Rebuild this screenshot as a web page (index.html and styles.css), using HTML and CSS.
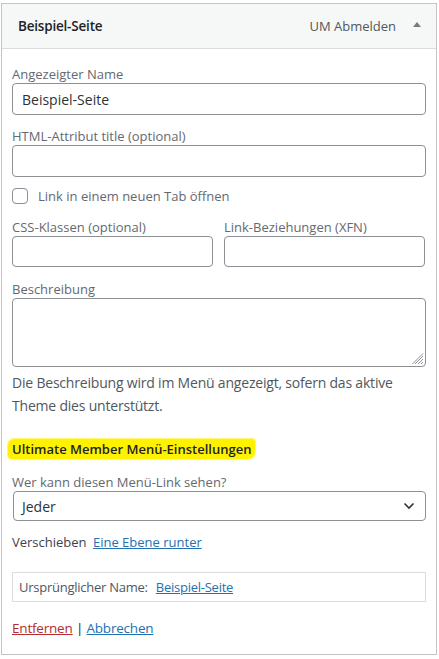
FILE: index.html
```html
<!DOCTYPE html>
<html lang="de">
<head>
<meta charset="utf-8">
<title>Menüeintrag</title>
<link rel="stylesheet" href="styles.css">
</head>
<body>
<div class="panel">
  <div class="panel-head">
    <span class="item-title">Beispiel-Seite</span>
    <span class="item-controls">
      <span class="item-type">UM Abmelden</span>
      <span class="toggle"></span>
    </span>
  </div>
  <div class="panel-body">
    <div class="field">
      <label class="lbl">Angezeigter Name</label>
      <div class="input"><span class="val">Beispiel-Seite</span></div>
    </div>
    <div class="field">
      <label class="lbl">HTML-Attribut title (optional)</label>
      <div class="input"></div>
    </div>
    <div class="check-row">
      <span class="checkbox"></span>
      <span class="check-text">Link in einem neuen Tab öffnen</span>
    </div>
    <div class="two-col">
      <div class="field">
        <label class="lbl">CSS-Klassen (optional)</label>
        <div class="input small"></div>
      </div>
      <div class="field">
        <label class="lbl">Link-Beziehungen (XFN)</label>
        <div class="input small"></div>
      </div>
    </div>
    <div class="field">
      <label class="lbl">Beschreibung</label>
      <div class="textarea">
        <svg class="grip" width="12" height="12" viewBox="0 0 12 12"><path d="M11 3 L3 11 M11 6 L6 11 M11 9 L9 11 M11 0.5 L0.5 11" stroke="#8c8f94" stroke-width="1" fill="none"/></svg>
      </div>
    </div>
    <p class="desc">Die Beschreibung wird im Menü angezeigt, sofern das aktive Theme dies unterstützt.</p>
    <h4 class="um-head"><span class="hl">Ultimate Member Menü-Einstellungen</span></h4>
    <div class="field">
      <label class="lbl">Wer kann diesen Menü-Link sehen?</label>
      <div class="select">
        <span class="val">Jeder</span>
        <svg class="chev" width="12" height="8" viewBox="0 0 12 8"><path d="M1.5 1.5 L6 6 L10.5 1.5" stroke="#2c3338" stroke-width="1.6" fill="none"/></svg>
      </div>
    </div>
    <div class="move">Verschieben <a class="link" href="#">Eine Ebene runter</a></div>
    <div class="original">Ursprünglicher Name: <a class="link" href="#">Beispiel-Seite</a></div>
    <div class="actions"><a class="delete" href="#">Entfernen</a> <span class="sep">|</span> <a class="link" href="#">Abbrechen</a></div>
  </div>
</div>
</body>
</html>
```
FILE: styles.css
```css
html, body {
  margin: 0;
  padding: 0;
  background: #fff;
}
body {
  font-family: "Open Sans", "Noto Sans", sans-serif;
  font-size: 13px;
  color: #3c434a;
}
.panel {
  margin: 3px 0 0 1px;
  width: 434px;
  border: 1px solid #c3c4c7;
  box-sizing: content-box;
  height: 650px;
}
.panel-head {
  height: 44px;
  background: #f6f7f7;
  border-bottom: 1px solid #dcdcde;
  display: flex;
  align-items: center;
  justify-content: space-between;
  padding: 0 15px 0 16px;
}
.item-title {
  font-size: 13.5px;
  font-weight: 600;
  color: #1d2327;
  letter-spacing: -0.2px;
}
.item-controls {
  display: flex;
  align-items: center;
  gap: 17px;
}
.item-type {
  color: #50575e;
  font-size: 13px;
}
.toggle {
  width: 0;
  height: 0;
  border-left: 4px solid transparent;
  border-right: 4px solid transparent;
  border-bottom: 5px solid #787c82;
  margin-top: -3px;
}
.panel-body {
  padding: 16px 10px 0 10px;
}
.field {
  display: flex;
  flex-direction: column;
}
.lbl {
  color: #646970;
  font-size: 13px;
  line-height: 18px;
}
.input, .textarea, .select {
  border: 1px solid #8c8f94;
  border-radius: 4px;
  box-sizing: border-box;
  height: 32px;
  display: flex;
  align-items: center;
  padding: 0 9px;
  margin-bottom: 12px;
  color: #2c3338;
  font-size: 14px;
}
.input.small {
  height: 31px;
  margin-bottom: 13px;
}
.check-row {
  display: flex;
  align-items: center;
  gap: 10px;
  height: 20px;
  margin-top: -3px;
  margin-bottom: 12px;
}
.checkbox {
  width: 16px;
  height: 16px;
  border: 1px solid #8c8f94;
  border-radius: 4px;
  box-sizing: border-box;
}
.check-text {
  color: #646970;
}
.two-col {
  display: grid;
  grid-template-columns: 201px 201px;
  column-gap: 11px;
}
.textarea {
  height: 69px;
  position: relative;
  margin-bottom: 0;
}
.grip {
  position: absolute;
  right: 1px;
  bottom: 1px;
}
.desc {
  margin: 4px 0 0 0;
  font-size: 14px;
  line-height: 23px;
  color: #50575e;
  letter-spacing: -0.2px;
  width: 400px;
}
.um-head {
  margin: 22px 0 14px 0;
  font-size: 13px;
  font-weight: 600;
  color: #1d2327;
  line-height: 20px;
}
.hl {
  background: #fff200;
  padding: 1px 4px 1px 4px;
  margin-left: -4px;
  border-radius: 6px 3px 7px 4px;
  box-shadow: 0 0 1px 1px rgba(255, 242, 0, 0.6);
}
.select {
  height: 30px;
  margin-left: 1px;
  justify-content: space-between;
  padding: 0 10px 0 8px;
  margin-bottom: 11px;
}
.move {
  color: #3c434a;
  line-height: 20px;
}
.link {
  color: #2271b1;
  text-decoration: underline;
}
.move .link {
  margin-left: 3px;
}
.original {
  margin-top: 20px;
  border: 1px solid #dcdcde;
  height: 30px;
  box-sizing: border-box;
  display: flex;
  align-items: center;
  padding: 0 6px;
  color: #50575e;
  letter-spacing: -0.25px;
  gap: 8px;
}
.actions {
  margin-top: 16px;
  font-size: 13.5px;
  letter-spacing: -0.2px;
  line-height: 20px;
}
.delete {
  color: #b32d2e;
  text-decoration: underline;
}
.sep {
  color: #1d2327;
}
```
